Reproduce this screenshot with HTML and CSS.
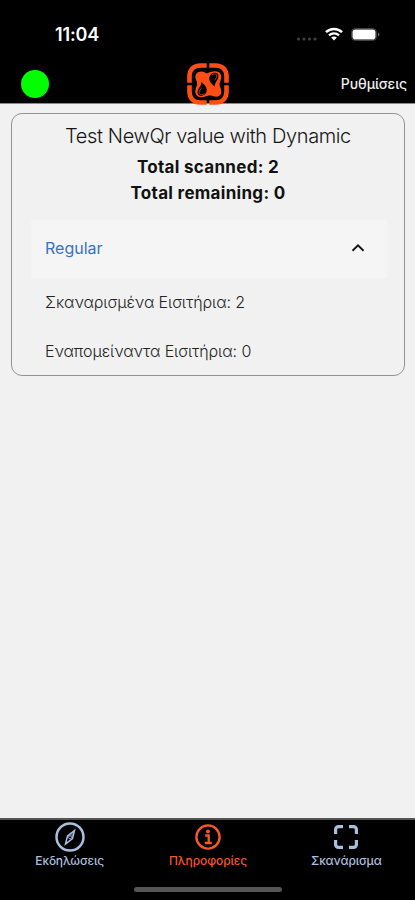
FILE: index.html
```html
<!DOCTYPE html>
<html lang="el">
<head>
<meta charset="utf-8">
<meta name="viewport" content="width=device-width, initial-scale=1">
<title>Πληροφορίες</title>
<link rel="stylesheet" href="styles.css">
</head>
<body>
<div class="screen">
  <div class="status">
    <span class="clock">11:04</span>
    <div class="indicators">
      <svg class="signal" width="22" height="6" viewBox="0 0 22 6" fill="#404040"><circle cx="2.5" cy="3" r="1.6"/><circle cx="8" cy="3" r="1.6"/><circle cx="13.5" cy="3" r="1.6"/><circle cx="19" cy="3" r="1.6"/></svg>
      <svg class="wifi" width="18" height="14" viewBox="0 0 18 14" fill="none" stroke="#fff" stroke-width="2.6"><path d="M1 5.1C5.4.9 12.6.9 17 5.1"/><path d="M4 8.4c2.8-2.6 7.2-2.6 10 0" stroke-width="2.3"/><path d="M9 13.5 6.1 10.6c1.6-1.5 4.2-1.5 5.8 0Z" fill="#fff" stroke="none"/></svg>
      <svg class="battery" width="29" height="13" viewBox="0 0 29 13"><rect x=".5" y=".5" width="25" height="12" rx="3.8" fill="none" stroke="#444"/><rect x="1.5" y="1.5" width="23" height="10" rx="2.8" fill="#fff"/><path d="M27 4.5c2 .8 2 3.2 0 4Z" fill="#666"/></svg>
    </div>
  </div>
  <header class="header">
    <span class="online"></span>
    <svg class="logo" width="42" height="42" viewBox="0 0 42 42">
      <rect x="8" y="36" width="26" height="4" fill="#000"/>
      <g fill="none" stroke="#ff4e13" stroke-width="4.6">
        <path d="M19.700 2.500H13.500C6.500 2.500 2.500 6.500 2.500 13.500v6.200"/>
        <path d="M22.300 2.500h6.200c7 0 11 4 11 11v6.200"/>
        <path d="M2.500 22.300v6.200c0 7 4 11 11 11h6.200"/>
        <path d="M39.500 22.300v6.200c0 7-4 11-11 11h-6.200"/>
      </g>
      <path d="M9.500 18C7 12.500 9 8.500 14.500 8.500c3 0 4 2.300 6.500 1.500C25 8.500 28 7.500 31.500 9c3.500 2 3 6.500 1.700 9.500-1 2.500-.7 4 .3 6.500 2 5.500-.2 9.500-6 8.500-2.500-.5-4-1.500-6.500-.7C17 34 14 35 11 33.500c-3.500-2.300-3-6.500-1.700-9.500 1-2.300 1.200-3.700.2-6Z" fill="#ff4e13"/>
      <path d="M22.300 16c-.3-4 2.500-6.500 6-6.300 4.200.3 3.600 5.500 1.300 8.300-1.500 2-1.700 3.500-2 5.600-2.300-2.300-5-4-5.300-7.600ZM19.700 26.500c.3 4-2.500 6.500-6 6.300-4.200-.3-3.600-5.500-1.300-8.300 1.500-2 1.700-3.500 2-5.600 2.300 2.300 5 4 5.300 7.600Z" fill="#000"/>
      <path d="M24.500 12c2-1.600 5.500-1.800 5.300 1-.2 1.500-1.300 2.800-2 4.200M17.500 30.500c-2 1.600-5.500 1.800-5.300-1 .2-1.500 1.300-2.800 2-4.200" fill="none" stroke="#ff4e13" stroke-width=".7"/>
    </svg>
    <span class="settings">Ρυθμίσεις</span>
  </header>
  <main class="content">
    <section class="card">
      <h1 class="title">Test NewQr value with Dynamic</h1>
      <p class="total">Total scanned: 2</p>
      <p class="total">Total remaining: 0</p>
      <div class="group">
        <span class="group-name">Regular</span>
        <svg width="14" height="10" viewBox="0 0 14 10" fill="none" stroke="#151515" stroke-width="1.9"><path d="m1.500 7.700 5.500-5.400 5.500 5.400"/></svg>
      </div>
      <p class="row">Σκαναρισμένα Εισιτήρια: 2</p>
      <p class="row">Εναπομείναντα Εισιτήρια: 0</p>
    </section>
  </main>
  <nav class="tabs">
    <div class="tab">
      <svg width="30" height="30" viewBox="0 0 30 30" fill="none" stroke="currentColor"><circle cx="15" cy="15" r="13.500" stroke-width="2.500"/><path d="m19.500 8.500-7 5.500-2 8 7-5.500Z" stroke-width="1.500"/><path d="m19.500 8.500-7 5.500 5 2.500Z" fill="currentColor" fill-opacity=".45" stroke="none"/><circle cx="15" cy="15.300" r="1.500" fill="#000" stroke-width=".8"/></svg>
      <span>Εκδηλώσεις</span>
    </div>
    <div class="tab active">
      <svg width="30" height="30" viewBox="0 0 30 30" fill="none" stroke="currentColor"><circle cx="15" cy="15" r="11.600" stroke-width="2.400"/><circle cx="15" cy="9.500" r="1.900" fill="currentColor" stroke="none"/><path d="M12.200 13.500h3.500v7M11.800 21h7" stroke-width="2.300"/></svg>
      <span>Πληροφορίες</span>
    </div>
    <div class="tab">
      <svg width="30" height="30" viewBox="0 0 30 30" fill="none" stroke="currentColor" stroke-width="3.200"><path d="M4.600 12V7.600c0-1.700 1.300-3 3-3H12M18 4.600h4.400c1.700 0 3 1.300 3 3V12M25.400 18v4.400c0 1.700-1.300 3-3 3H18M12 25.400H7.600c-1.700 0-3-1.300-3-3V18"/></svg>
      <span>Σκανάρισμα</span>
    </div>
    <span class="home-bar"></span>
  </nav>
</div>
</body>
</html>
```
FILE: styles.css
```css
* { box-sizing: border-box; }
body { margin: 0; font-family: Inter, "Liberation Sans", sans-serif; background: #f1f1f1; }
h1, p { margin: 0; font-weight: 400; }
span { white-space: nowrap; }
svg { display: block; flex: none; }
.screen { width: 415px; height: 900px; display: flex; flex-direction: column; }
.status { height: 63px; background: #000; color: #fff; display: flex; justify-content: space-between; padding: 22px 35px 0 55px; }
.clock { font-size: 18px; line-height: 25px; font-weight: 600; letter-spacing: -.15px; }
.indicators { display: flex; align-items: center; height: 24px; }
.signal { margin-top: 9px; }
.wifi { margin: 0 8px 0 7px; }
.header { height: 41px; background: #000; border-bottom: 1px solid #8b8b8b; display: grid; grid-template-columns: 1fr 42px 1fr; align-items: start; padding: 0 8px 0 21px; }
.online { width: 28px; height: 28px; border-radius: 50%; background: #0f0; margin-top: 7px; }
.logo { position: relative; left: -6.500px; }
.settings { color: #eee; font-size: 14px; font-weight: 500; line-height: 20px; letter-spacing: -.1px; margin-top: 11px; justify-self: end; }
.content { flex: 1; padding: 9px 10px 0 11px; }
.card { height: 263px; border: 1px solid #939393; border-radius: 11px; padding: 9px 17px 0 19px; }
.title { text-align: center; font-size: 20px; line-height: 27px; font-weight: 300; letter-spacing: -.38px; color: #161616; margin-right: 2px; }
.total { text-align: center; font-size: 17px; line-height: 26px; font-weight: 700; letter-spacing: .3px; color: #111; margin-right: 2px; }
.title + .total { margin-top: 4px; }
.group { height: 58px; margin-top: 14px; background: #f5f5f5; display: flex; align-items: center; justify-content: space-between; padding: 0 22px 2px 14px; }
.group-name { color: #3972bd; font-size: 16px; }
.row { font-size: 16px; line-height: 49px; font-weight: 300; letter-spacing: -.07px; color: #242424; padding-left: 14px; }
.tabs { height: 82px; background: #000; border-top: 2px solid #555; display: grid; grid-template-columns: repeat(3, 1fr); position: relative; color: #a9bfdf; }
.tab { display: flex; flex-direction: column; align-items: center; padding: 2px 0 0 1px; font-size: 12px; line-height: 17px; font-weight: 500; letter-spacing: -.1px; }
.active { color: #f6572b; }
.home-bar { position: absolute; left: 134px; bottom: 8px; width: 148px; height: 5px; border-radius: 3px; background: #555; }
```
